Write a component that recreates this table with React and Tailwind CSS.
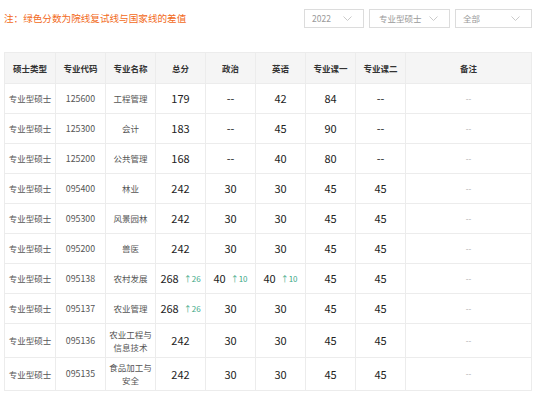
const rows = [
  ["125600", "工程管理", ["179"], ["--"], ["42"], ["84"], ["--"]],
  ["125300", "会计", ["183"], ["--"], ["45"], ["90"], ["--"]],
  ["125200", "公共管理", ["168"], ["--"], ["40"], ["80"], ["--"]],
  ["095400", "林业", ["242"], ["30"], ["30"], ["45"], ["45"]],
  ["095300", "风景园林", ["242"], ["30"], ["30"], ["45"], ["45"]],
  ["095200", "兽医", ["242"], ["30"], ["30"], ["45"], ["45"]],
  ["095138", "农村发展", ["268", "26"], ["40", "10"], ["40", "10"], ["45"], ["45"]],
  ["095137", "农业管理", ["268", "26"], ["30"], ["30"], ["45"], ["45"]],
  ["095136", "农业工程与信息技术", ["242"], ["30"], ["30"], ["45"], ["45"]],
  ["095135", "食品加工与安全", ["242"], ["30"], ["30"], ["45"], ["45"]],
];

const heads = ["硕士类型", "专业代码", "专业名称", "总分", "政治", "英语", "专业课一", "专业课二", "备注"];

const Chevron = () => (
  <svg width="9" height="5" viewBox="0 0 9 5" fill="none">
    <path d="M0.5 0.5 L4.5 4.5 L8.5 0.5" stroke="#c4c4c4" strokeWidth="0.9" />
  </svg>
);

const Select = ({ label, className }) => (
  <div
    className={`h-[19px] flex items-center justify-between pl-[7px] pr-[11px] border border-[#dcdcdc] text-[8.5px] text-[#999] ${className}`}
  >
    <span>{label}</span>
    <Chevron />
  </div>
);

const Score = ({ v }) => (
  <div className="flex items-center justify-center gap-[5px]">
    <span className="text-[11px] text-[#222]">{v[0]}</span>
    {v[1] && <span className="text-[8px] text-[#3ca887]">↑{v[1]}</span>}
  </div>
);

export default function App() {
  return (
    <div
      className="w-[534px] h-[398px] bg-white overflow-hidden pl-[4px] pr-[2px]"
      style={{ fontFamily: '"Noto Sans CJK SC", "Noto Sans", sans-serif' }}
    >
      <div className="flex items-center justify-between pt-[9px] h-[28px]">
        <p className="text-[9.6px] text-[#f26a21] leading-none">注：绿色分数为院线复试线与国家线的差值</p>
        <div className="flex gap-[5px]">
          <Select label="2022" className="w-[60px]" />
          <Select label="专业型硕士" className="w-[81px] pl-[9px] pr-[8px]" />
          <Select label="全部" className="w-[77px] pr-[8px]" />
        </div>
      </div>
      <table className="mt-[24px] w-[528px] table-fixed border-collapse">
        <colgroup>
          <col className="w-[51px]" />
          {[0, 1, 2, 3, 4, 5, 6].map((i) => (
            <col key={i} className="w-[50px]" />
          ))}
          <col />
        </colgroup>
        <thead>
          <tr className="h-[31px] bg-[#f5f5f5]">
            {heads.map((h) => (
              <th key={h} className="border border-[#ececec] text-[8.5px] font-bold text-[#333] text-center p-0">
                {h}
              </th>
            ))}
          </tr>
        </thead>
        <tbody>
          {rows.map((r, i) => (
            <tr key={r[0]} className={i >= 8 ? (i === 8 ? "h-[34px]" : "h-[33px]") : "h-[30px]"}>
              <td className="border border-[#ececec] text-[8.5px] text-[#555] text-center p-0">专业型硕士</td>
              <td className="border border-[#ececec] text-[8.8px] text-[#555] text-center p-0">{r[0]}</td>
              <td className="border border-[#ececec] text-[8.5px] text-[#555] text-center px-[3px] py-0 leading-[13px]">
                {r[1]}
              </td>
              {r.slice(2).map((v, j) => (
                <td key={j} className="border border-[#ececec] text-center p-0">
                  <Score v={v} />
                </td>
              ))}
              <td className="border border-[#ececec] text-[8px] text-[#aaa] text-center p-0">--</td>
            </tr>
          ))}
        </tbody>
      </table>
    </div>
  );
}
